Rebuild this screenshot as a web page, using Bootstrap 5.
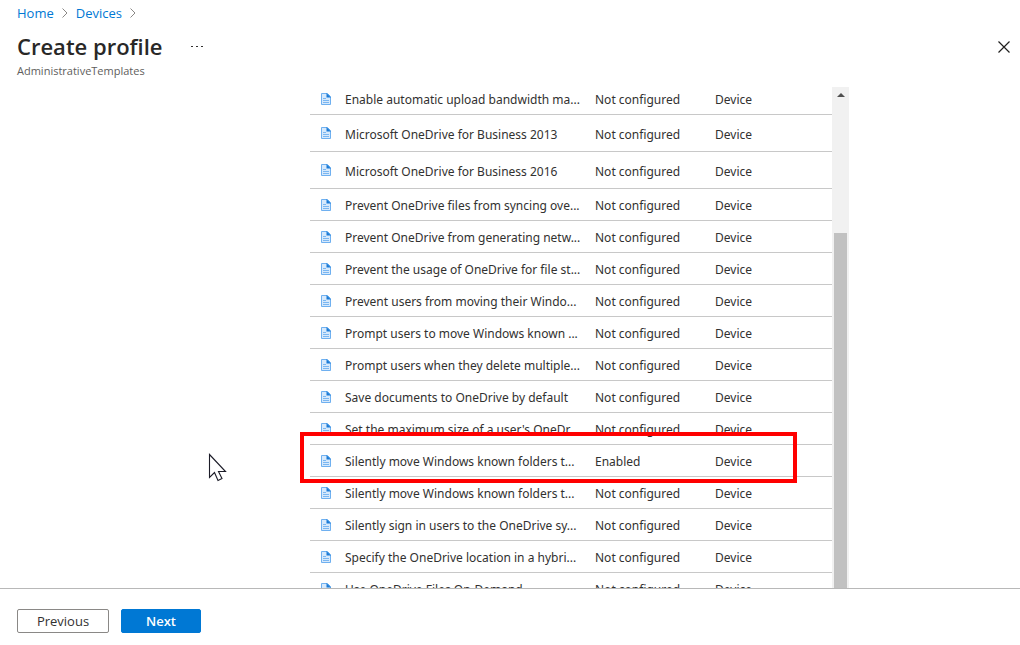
<!DOCTYPE html>
<html lang="en">
<head>
<meta charset="utf-8">
<meta name="viewport" content="width=device-width, initial-scale=1">
<title>Create profile</title>
<link rel="stylesheet" href="https://cdn.jsdelivr.net/npm/bootstrap@5.3.0/dist/css/bootstrap.min.css">
<style>
  body { font-family: "Segoe UI", "Open Sans", "Noto Sans", sans-serif; font-size: 13px; line-height: 20px; color: #323130; background: #fff; }
  a { color: #0078d4; text-decoration: none; }
  .page-head { height: 87px; padding: 3px 8px 0 17px; }
  .crumbs { gap: 8px; height: 20px; }
  .page-title { font-size: 22px; line-height: 30px; padding-bottom: 2px; font-weight: 600; margin: 0; color: #292827; }
  .title-row { margin-top: 8px; gap: 26px; height: 32px; }
  .subtitle { font-size: 11px; line-height: 16px; color: #605e5c; }
  .icon-btn { border: 0; background: none; padding: 0; display: flex; width: 16px; height: 16px; align-items: center; justify-content: center; }
  .pane { margin-left: 310px; margin-right: 171px; min-height: 0; }
  .settings { font-family: "Segoe UI", "Noto Sans", "Open Sans", sans-serif; font-size: 12px; table-layout: fixed; width: 100%; margin-top: -4px; border-collapse: separate; border-spacing: 0; }
  .settings td { height: 32px; padding: 3px 0 0; border-bottom: 1px solid #c8c8c8; white-space: nowrap; overflow: hidden; vertical-align: middle; }
  .settings td:first-child { padding-top: 2px; }
  .settings .tall td { height: 37px; }
  .settings .tall td:first-child { padding-top: 0; }
  .settings svg { display: block; margin-left: 10px; }
  .col-icon { width: 35px; } .col-name { width: 250px; } .col-state { width: 120px; }
  .track { width: 17px; flex: none; background: #f1f1f1; padding: 6px 2px 0; }
  .track svg { display: block; margin: 0 auto; }
  .thumb { background: #c1c1c1; margin-top: 136px; }
  .marker { position: absolute; left: -10px; right: 52px; top: 345px; height: 51px; border: 4px solid #f00; pointer-events: none; }
  .pointer { position: absolute; left: 208px; top: 453px; pointer-events: none; }
  .foot { border-top: 1px solid #b8b8b8; height: 57px; padding: 20px 17px 0; gap: 12px; }
  .foot .btn { --bs-btn-padding-y: 0; --bs-btn-padding-x: 0; --bs-btn-font-size: 13px; --bs-btn-border-radius: 2px; height: 24px; line-height: 20px; }
  .btn-prev { width: 92px; --bs-btn-color: #323130; --bs-btn-bg: #fff; --bs-btn-border-color: #8a8886; }
  .btn-next { width: 80px; --bs-btn-color: #fff; --bs-btn-bg: #0078d4; --bs-btn-border-color: #0078d4; --bs-btn-font-weight: 600; }
</style>
</head>
<body class="d-flex flex-column vh-100 overflow-hidden">
<svg width="0" height="0" class="position-absolute" aria-hidden="true">
  <symbol id="doc" viewBox="0 0 12 13">
    <path d="M1.500 .5H7.500L10.500 3.500V11.500H1.500z" fill="#d6e9fc" stroke="#6fb0f0"/>
    <path d="M6.500 0 11 4.500H6.500z" fill="#1b7bd6"/>
    <path d="M3 5.500h3M3 7.500h6M3 9.500h6" stroke="#7ab6f1"/>
  </symbol>
  <symbol id="chev" viewBox="0 0 6 10"><path d="M.5.5 5 5 .5 9.500" fill="none" stroke="#8a8886"/></symbol>
</svg>
<header class="page-head flex-shrink-0">
  <nav class="crumbs d-flex align-items-center" aria-label="Breadcrumb">
    <a href="#">Home</a><svg width="6" height="10"><use href="#chev"/></svg>
    <a href="#">Devices</a><svg width="6" height="10"><use href="#chev"/></svg>
  </nav>
  <div class="title-row d-flex align-items-center">
    <h1 class="page-title">Create profile</h1>
    <button class="icon-btn" type="button" aria-label="More"><svg width="12" height="2" fill="#323130"><path d="M0 0h2v1H0zM5 0h2v1H5zM10 0h2v1h-2z"/></svg></button>
    <button class="icon-btn ms-auto" type="button" aria-label="Close"><svg width="12" height="12"><path d="m.5.5 11 11m0-11-11 11" stroke="#201f1e" stroke-width="1.200"/></svg></button>
  </div>
  <div class="subtitle">AdministrativeTemplates</div>
</header>
<main class="pane position-relative d-flex flex-grow-1">
  <div class="flex-grow-1 overflow-hidden">
    <table class="settings">
      <colgroup><col class="col-icon"><col class="col-name"><col class="col-state"><col></colgroup>
      <tbody>
        <tr><td><svg width="12" height="13"><use href="#doc"/></svg></td><td>Enable automatic upload bandwidth ma...</td><td>Not configured</td><td>Device</td></tr>
        <tr class="tall"><td><svg width="12" height="13"><use href="#doc"/></svg></td><td>Microsoft OneDrive for Business 2013</td><td>Not configured</td><td>Device</td></tr>
        <tr class="tall"><td><svg width="12" height="13"><use href="#doc"/></svg></td><td>Microsoft OneDrive for Business 2016</td><td>Not configured</td><td>Device</td></tr>
        <tr><td><svg width="12" height="13"><use href="#doc"/></svg></td><td>Prevent OneDrive files from syncing ove...</td><td>Not configured</td><td>Device</td></tr>
        <tr><td><svg width="12" height="13"><use href="#doc"/></svg></td><td>Prevent OneDrive from generating netw...</td><td>Not configured</td><td>Device</td></tr>
        <tr><td><svg width="12" height="13"><use href="#doc"/></svg></td><td>Prevent the usage of OneDrive for file st...</td><td>Not configured</td><td>Device</td></tr>
        <tr><td><svg width="12" height="13"><use href="#doc"/></svg></td><td>Prevent users from moving their Windo...</td><td>Not configured</td><td>Device</td></tr>
        <tr><td><svg width="12" height="13"><use href="#doc"/></svg></td><td>Prompt users to move Windows known ...</td><td>Not configured</td><td>Device</td></tr>
        <tr><td><svg width="12" height="13"><use href="#doc"/></svg></td><td>Prompt users when they delete multiple...</td><td>Not configured</td><td>Device</td></tr>
        <tr><td><svg width="12" height="13"><use href="#doc"/></svg></td><td>Save documents to OneDrive by default</td><td>Not configured</td><td>Device</td></tr>
        <tr><td><svg width="12" height="13"><use href="#doc"/></svg></td><td>Set the maximum size of a user's OneDr...</td><td>Not configured</td><td>Device</td></tr>
        <tr><td><svg width="12" height="13"><use href="#doc"/></svg></td><td>Silently move Windows known folders t...</td><td>Enabled</td><td>Device</td></tr>
        <tr><td><svg width="12" height="13"><use href="#doc"/></svg></td><td>Silently move Windows known folders t...</td><td>Not configured</td><td>Device</td></tr>
        <tr><td><svg width="12" height="13"><use href="#doc"/></svg></td><td>Silently sign in users to the OneDrive sy...</td><td>Not configured</td><td>Device</td></tr>
        <tr><td><svg width="12" height="13"><use href="#doc"/></svg></td><td>Specify the OneDrive location in a hybri...</td><td>Not configured</td><td>Device</td></tr>
        <tr><td><svg width="12" height="13"><use href="#doc"/></svg></td><td>Use OneDrive Files On-Demand</td><td>Not configured</td><td>Device</td></tr>
      </tbody>
    </table>
  </div>
  <div class="track d-flex flex-column">
    <svg width="8" height="4"><path d="M0 4 4 0l4 4z" fill="#505050"/></svg>
    <div class="thumb flex-grow-1"></div>
  </div>
  <div class="marker"></div>
</main>
<footer class="foot d-flex align-items-start flex-shrink-0">
  <button class="btn btn-prev" type="button">Previous</button>
  <button class="btn btn-next" type="button">Next</button>
</footer>
<svg class="pointer" width="20" height="30" viewBox="0 0 20 30"><path d="M1.500 1.500v23l5-5 3.500 8 4-2-3.500-7h7z" fill="#fff" stroke="#1c1c28" stroke-width="1.100"/></svg>
<script src="https://cdn.jsdelivr.net/npm/bootstrap@5.3.0/dist/js/bootstrap.bundle.min.js"></script>
</body>
</html>
